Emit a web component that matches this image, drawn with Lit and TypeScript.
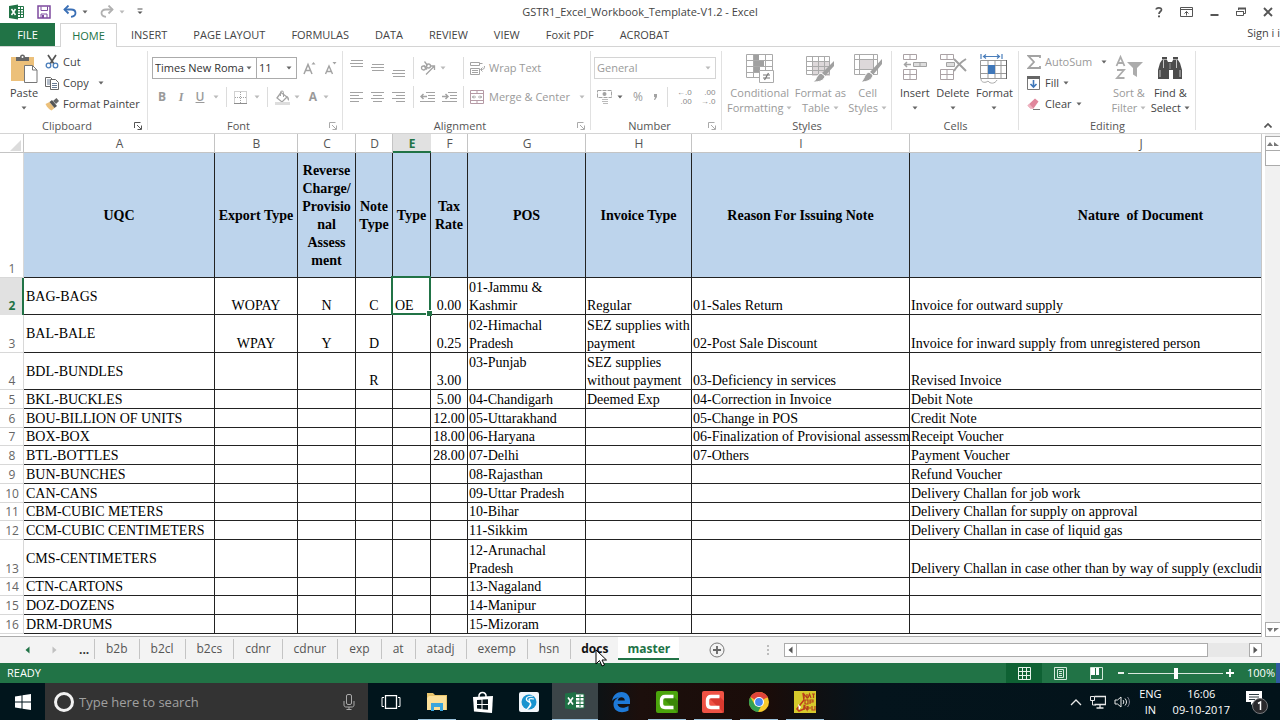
import { LitElement, html, css, svg, nothing } from "lit";
import { customElement } from "lit/decorators.js";
import { classMap } from "lit/directives/class-map.js";

const icon = (w: number, h: number, body: unknown) =>
  html`<svg class="icon" width=${w} height=${h} viewBox="0 0 ${w} ${h}" fill="none" aria-hidden="true">${body}</svg>`;

const caret = (color = "#666") =>
  html`<svg class="icon" width="6" height="4" viewBox="0 0 6 4" aria-hidden="true"><path d="M0.5 0.5h5L3 3.5z" fill=${color} /></svg>`;

const launcher = (color: string) =>
  icon(8, 8, svg`<path d="M0.500 6V0.500h6M3 3l4 4M7.500 3.500v4h-4" stroke=${color}/>`);

const lines = (rows: number[][], h = 12) =>
  icon(14, h, svg`${rows.map(([x, y, w]) => svg`<path d="M${x} ${y + 0.5}h${w}" stroke="#a3a3a3"/>`)}`);

const G = "#a3a3a3";
const D = "#555";

const icons = {
  excel: icon(16, 16, svg`<path d="M7.500 2.500h7v11h-7z" fill="#fff" stroke="#217346"/><path d="M8 5.500h6M8 8h6M8 10.500h6M11.500 3v10" stroke="#217346"/><path d="M0 2l9-1.500v15L0 14z" fill="#217346"/><path d="M2.500 5l4 6M6.500 5l-4 6" stroke="#fff" stroke-width="1.500"/>`),
  save: icon(14, 14, svg`<path d="M1 1h12v12H1z" stroke="#7d4a9e" stroke-width="1.500"/><path d="M4 1.500v4h6.500v-4M4 13V9h6v4" stroke="#7d4a9e"/><path d="M5 10h2v3H5z" fill="#7d4a9e"/>`),
  undo: icon(14, 13, svg`<path d="M1.500 4.500H8c3 0 4.500 1.500 4.500 3.500S11 11.500 8 11.800" stroke="#3a6fb5" stroke-width="1.800"/><path d="M5.500 0.500l-4 4 4 4" stroke="#3a6fb5" stroke-width="1.800"/>`),
  redo: icon(14, 13, svg`<path d="M12.500 4.500H6C3 4.500 1.500 6 1.500 8S3 11.500 6 11.800" stroke="#b0b0b0" stroke-width="1.800"/><path d="M8.500 0.500l4 4-4 4" stroke="#b0b0b0" stroke-width="1.800"/>`),
  custom: icon(6, 7, svg`<path d="M0.500 1h5" stroke="#555"/><path d="M0.500 3.500h5L3 6z" fill="#555"/>`),
  help: icon(8, 12, svg`<path d="M1.200 3.500C1.200 1.500 6.500 1 6.500 3.700 6.500 5.600 4 5.500 4 8" stroke="#555" stroke-width="1.700"/><path d="M3 9.500h2v1.800H3z" fill="#555"/>`),
  ribbonOpt: icon(13, 10, svg`<path d="M0.500 0.500h12v9H0.500zM1 2.500h11" stroke="#555"/><path d="M6.500 8.500v-4M4.500 6.500l2-2 2 2" stroke="#555"/>`),
  min: icon(9, 10, svg`<path d="M0.500 8h8" stroke="#555" stroke-width="2"/>`),
  restore: icon(10, 10, svg`<path d="M2.500 3V1.500h7v5H8" stroke="#555"/><path d="M2 1.500h8" stroke="#555" stroke-width="2"/><path d="M0.500 4.500h7v4h-7z" stroke="#555"/><path d="M0 4.500h8" stroke="#555"/>`),
  close: icon(10, 10, svg`<path d="M1 1l8 8M9 1L1 9" stroke="#555" stroke-width="1.900"/>`),
  paste: icon(28, 30, svg`<path d="M1 3h23v24H1z" fill="#ecc07a"/><path d="M6 7V3h4a2.500 2.500 0 015 0h4v4z" fill="#666"/><circle cx="12.500" cy="3" r="1" fill="#fff"/><path d="M14.500 11.500h8l4.500 4.500v12.500H14.500z" fill="#fff" stroke="#777"/><path d="M22.500 11.500V16H27" stroke="#777"/>`),
  cut: icon(14, 15, svg`<path d="M3 1l6 9M11 1L5 10" stroke="#555" stroke-width="1.700"/><circle cx="3.500" cy="11.500" r="2.300" stroke="#4a7ebb" stroke-width="1.300"/><circle cx="10.500" cy="11.500" r="2.300" stroke="#4a7ebb" stroke-width="1.300"/>`),
  copy: icon(14, 14, svg`<path d="M0.500 1.500h5l2 2v7h-7z" fill="#fff" stroke="#666"/><path d="M5.500 3.500h5l3 3v7h-8z" fill="#fff" stroke="#666"/><path d="M2 4h3M2 6h3M2 8h3M7 7.500h5M7 9.500h5M7 11.500h5" stroke="#6a7c94"/>`),
  painter: icon(14, 14, svg`<path d="M0.500 7l4-2 5 6-3 2.500C4 12.500 2 10 0.500 7z" fill="#ecc07a"/><path d="M4.500 5L7 3l5 6-2.500 2z" fill="#555"/><path d="M8 4l3.500-3 2.500 3-3 3z" fill="#666"/>`),
  growA: icon(14, 14, svg`<path d="M1 13L5 3.500 9 13M2.500 9.500h5" stroke=${G} stroke-width="1.500"/><path d="M8.500 3.500L10.500 1l2 2.500z" fill=${G}/>`),
  shrinkA: icon(14, 14, svg`<path d="M1.500 13L5 5l3.500 8M3 10.500h4" stroke=${G} stroke-width="1.400"/><path d="M8.500 1h4l-2 2.500z" fill=${G}/>`),
  borders: icon(13, 13, svg`<path d="M0.500 0.500h12v12H0.500zM6.500 1v11M1 6.500h11" stroke=${G} stroke-dasharray="1 1"/><path d="M0 12.500h13" stroke="#8d8d8d"/>`),
  bucket: icon(15, 15, svg`<path d="M6 2.500L12 7l-5 5-5-4z" stroke=${G} stroke-width="1.300"/><path d="M5.500 6V2.500a1.500 1.500 0 013 0V7" stroke=${G}/><path d="M12 6c2 1 2.500 3 1.500 5-1-1-1.500-3-1.500-5z" fill=${G}/><path d="M0 13.500h15" stroke="#ddd" stroke-width="3"/>`),
  orient: icon(16, 15, svg`<circle cx="3.500" cy="7" r="2" stroke=${G} stroke-width="1.300"/><path d="M4 4.500l3 4" stroke=${G} stroke-width="1.300"/><circle cx="8.500" cy="5" r="2" stroke=${G} stroke-width="1.300"/><path d="M4.500 0.500l3 4" stroke=${G} stroke-width="1.300"/><path d="M6 13.500L14.500 5M14.500 9V5h-4" stroke=${G} stroke-width="1.300"/>`),
  outdent: icon(15, 12, svg`<path d="M6 1.500h9M8 4.500h7M8 7.500h7M0 10.500h15" stroke=${G}/><path d="M7 5.500H1M3.500 3L1 5.500 3.500 8" stroke=${G} stroke-width="1.500"/>`),
  indent: icon(15, 12, svg`<path d="M6 1.500h9M8 4.500h7M8 7.500h7M0 10.500h15" stroke=${G}/><path d="M0 5.500h6M3.500 3L6 5.500 3.500 8" stroke=${G} stroke-width="1.500"/>`),
  wrap: icon(15, 15, svg`<path d="M0.500 1.500h9v3h-9zM9.500 2.500h3M0.500 7.500h9v6h-9zM2 9.500h6M2 11.500h6" stroke=${G}/><path d="M14.500 5c0 3-1 3.500-3.500 3.500M12.500 6.500l-2 2 2 2" stroke=${G}/>`),
  merge: icon(15, 14, svg`<path d="M0.500 0.500h13v13H0.500zM0.500 3.500h13M0.500 10.500h13M7 1v2.500M7 10.500V13" stroke="#b59aa5"/><path d="M2 7h4M12 7H8M4 5.500L2.500 7 4 8.500M10 5.500L11.500 7 10 8.500" stroke=${G}/>`),
  money: icon(16, 16, svg`<path d="M0.500 1.500h14v7h-14z" stroke=${G} stroke-dasharray="4 1"/><circle cx="7.500" cy="5" r="2" fill=${G}/><path d="M5 10.500h6M5 12.500h6M6 14.500h5" stroke="#bbb"/>`),
  comma: icon(5, 8, svg`<path d="M1 1h3v3L2 7H1l1-3H1z" fill=${G}/>`),
  cond: icon(28, 30, svg`<path d="M0.500 0.500h26v23H0.500zM0.500 6.500h26M0.500 12.500h26M0.500 18.500h26M7.500 0.500v23M19.500 0.500v23" stroke="#aaa"/><path d="M8 1h5v5H8zM8 7h10v5H8zM8 13h6v5H8z" fill="#a0a0a0"/><path d="M13.500 16.500h14v12h-14z" fill="#fff" stroke="#aaa"/><path d="M17 21h7M17 24h7M22.500 19l-4 7" stroke="#777" stroke-width="1.200"/>`),
  table: icon(28, 30, svg`<path d="M6 8h18v14H6z" fill="#ddd8da"/><path d="M0.500 2.500h23v18H0.500zM0.500 7.500h23M0.500 12.500h23M0.500 16.500h23M6.500 2.500v18M12.500 2.500v18M18.500 2.500v18" stroke="#aaa"/><path d="M28 7v5l-9 10-3-3z" fill="#a0a0a0"/><path d="M15 19l4 3c-1 5-6 6-12 6 4-2 3-7 8-9z" fill="#a0a0a0" stroke="#fff"/>`),
  styles: icon(28, 30, svg`<path d="M5 6h15v10H5z" fill="#ddd8da"/><path d="M0.500 0.500h23v20H0.500zM0.500 5.500h23M0.500 15.500h23M5.500 0.500v20M19.500 0.500v20" stroke="#aaa"/><path d="M28 5v5l-9 11-3-3z" fill="#a0a0a0"/><path d="M15 18l4 3c-1 5-6 7-12 7 4-3 3-8 8-10z" fill="#a0a0a0" stroke="#fff"/>`),
  insert: icon(26, 28, svg`<path d="M1.500 0.500h13v5h-13zM8 0.500v5M1.500 15.500h13v10h-13zM8 15.500v10M1.500 20.500h13" stroke="#aaa2a5"/><path d="M11.500 8.500h13v4h-13z" fill="#ddd" stroke=${G}/><path d="M18 8.500v4" stroke=${G}/><path d="M9 10.500H2M5 8l-2.500 2.500L5 13" stroke=${G} stroke-width="1.500"/>`),
  del: icon(28, 28, svg`<path d="M1.500 0.500h13v5h-13zM8 0.500v5M1.500 15.500h13v10h-13zM8 15.500v10M1.500 20.500h13" stroke="#aaa2a5"/><path d="M7.500 8.500h8v4h-8z" fill="#ddd" stroke=${G}/><path d="M15 5c4 4 8 8 12 12M27 5c-5 3-9 7-12 12" stroke="#a0a0a0" stroke-width="2"/>`),
  format: icon(28, 30, svg`<path d="M1 0v5M22 0v5M3 2.500h17M6 0.500L3.500 2.500 6 4.500M17 0.500L19.500 2.500 17 4.500" stroke="#4a7ebb" stroke-width="1.200"/><path d="M0.500 6.500h26v18H0.500zM0.500 11.500h26M0.500 19.500h26M8 6.500v18M15 6.500v18M21 6.500v18" stroke="#999"/><path d="M26.500 6v19" stroke="#666"/><path d="M8 11h7v9H8z" fill="#3f77b9"/><path d="M1 25c0 4 5 4 7 2 2 3 7 3 9-1" stroke="#aaa"/>`),
  sum: icon(14, 14, svg`<path d="M13 3V1H1.500L7 7l-5.500 6H13v-2" stroke=${G} stroke-width="1.800"/>`),
  fill: icon(14, 14, svg`<path d="M0.500 0.500h12v13H0.500z" fill="#fff" stroke="#777"/><path d="M0 1.500h13" stroke="#666" stroke-width="3"/><path d="M6.500 4v7M3.500 8l3 3 3-3" stroke="#3f77b9" stroke-width="1.600"/>`),
  clear: icon(14, 12, svg`<path d="M8 0.500l3.500 3-5 7H3.500L0.500 7.500z" fill="#e0869c"/><path d="M0.500 7.500l3 3h3l-4-4.500z" fill="#efb3c0"/><path d="M6 11.500h7" stroke="#777"/>`),
  sort: icon(28, 28, svg`<path d="M1.500 12L5.500 3 9.500 12M3 9h5M2 16h7l-7 8h7.500" stroke="#acacac" stroke-width="1.800"/><path d="M12 8h16l-6 6v9l-4-2.500V14z" fill="#acacac"/>`),
  find: icon(26, 28, svg`<path d="M5 3h5v3l1 2h4l1-2V3h5v3l2 3 2 7v9h-9v-9h-4v9H1v-9l2-7 2-3z" fill="#4c4c4c"/><path d="M13 9v6" stroke="#999"/><path d="M3 16v7M23 16v7M6.500 6v8M19.500 6v8" stroke="#c4c4c4"/><path d="M5 5.500h5M16 5.500h5" stroke="#aaa"/>`),
  collapse: icon(8, 5, svg`<path d="M0.500 4.500L4 1l3.500 3.500" stroke="#555" stroke-width="1.700"/>`),
  plus: icon(16, 16, svg`<circle cx="8" cy="8" r="7" stroke="#777"/><path d="M8 4v8M4 8h8" stroke="#666" stroke-width="1.800"/>`),
  dots: icon(2, 12, svg`<path d="M1 1v2M1 5v2M1 9v2" stroke="#aaa" stroke-width="1.500"/>`),
  triL: (c: string) => icon(5, 8, svg`<path d="M4.500 0.500v7L0.500 4z" fill=${c}/>`),
  triR: (c: string) => icon(5, 8, svg`<path d="M0.500 0.500v7L4.500 4z" fill=${c}/>`),
  triU: icon(14, 6, svg`<path d="M1 5l3-4 3 4zM8 5V1l5 4z" fill="#777"/>`),
  triD: icon(14, 6, svg`<path d="M1 1h6L4 5zM8 1h5L8 5z" fill="#777"/>`),
  normal: icon(13, 13, svg`<path d="M0.500 0.500h12v12H0.500zM4.500 0v13M8.500 0v13M0 4.500h13M0 8.500h13" stroke="#e6f3ea"/>`),
  pageView: icon(13, 13, svg`<path d="M0.500 0.500h12v12H0.500zM3.500 2.500h6v8h-6zM5 4.500h3M5 6.500h3M5 8.500h3" stroke="#d5eadc"/>`),
  breakView: icon(13, 13, svg`<path d="M0.500 0.500h12v12H0.500z" stroke="#d5eadc"/><path d="M1 1h4v7H1zM6 1h3v7H6z" fill="#fff"/>`),
  windows: icon(16, 16, svg`<path d="M0 2.500L6.500 1.500V7.500H0zM7.500 1.300L16 0v7.500H7.500zM0 8.500h6.500v6L0 13.500zM7.500 8.500H16V16l-8.500-1.300z" fill="#fff"/>`),
  cortana: icon(22, 22, svg`<circle cx="11" cy="11" r="8.500" stroke="#f2f2f2" stroke-width="3"/>`),
  mic: icon(12, 16, svg`<rect x="3.500" y="0.500" width="5" height="10" rx="1.500" stroke="#aaa"/><path d="M1 7v4c0 1.500 1 2 2 2h6c1 0 2-.5 2-2V7M6 13v2.500M3.500 15.500h5" stroke="#aaa"/>`),
  taskview: icon(20, 14, svg`<path d="M4.500 0.500h11v13h-11z" stroke="#fff" stroke-width="1.300"/><path d="M3 2.500H1v9h2M17 2.500h2v9h-2" stroke="#fff"/>`),
  folder: icon(22, 20, svg`<path d="M1 1h6l2 2h12v15H1z" fill="#e8c56c"/><path d="M3 4h17v14H1V6z" fill="#fbe09a"/><path d="M5 19v-8h12v8h-3v-4H8v4z" fill="#3aa5dd"/>`),
  store: icon(22, 22, svg`<path d="M7 6C6 0 15 0 14 6" stroke="#fff" stroke-width="1.500"/><path d="M1 6l20-1-1 17-18-1.500z" fill="#fff"/><path d="M5 9l4.500-.3v4.300H5zM10.500 8.600l5.500-.3v4.700h-5.500zM5 14h4.500v4L5 17.600zM10.500 14H16v4.700l-5.500-.5z" fill="#07161c"/>`),
  shield: icon(22, 22, svg`<rect x="1" y="1" width="20" height="20" rx="2" fill="#f2f6fa"/><circle cx="11" cy="11" r="7.500" fill="#1993cf"/><path d="M15 5c-8 0-8 4-4 6s1 5-3 8M16 8c-5-1-6 0-4 3 1 2 0 4-2 6" stroke="#fff" stroke-width="1.200"/>`),
  excelBig: icon(22, 20, svg`<path d="M11 3h9v14h-9z" fill="#fff" stroke="#1e7145"/><path d="M12 6.500h8M12 10h8M12 13.500h8M16 4v12" stroke="#1e7145"/><path d="M1 2.500L12 1v18L1 17.500z" fill="#1e7145"/><path d="M4 6.500l5 7M9 6.500l-5 7" stroke="#fff" stroke-width="1.600"/>`),
  edge: icon(22, 22, svg`<path d="M2 10C3 4 7 1 11.500 1 17 1 20 5 20 10v3H7.500c.5 4 6 5 11 2v4.500C12 23 3.500 21 3.500 13.500 3.500 10 6 7 9.500 6 5.500 6.500 3 8.500 2 10zm5.800-.5h7c0-4-6.300-4.500-7 0z" fill="#1e7ad8"/>`),
  camG: icon(24, 24, svg`<rect x="1" y="1" width="22" height="22" rx="2" fill="#4ba40c"/><path d="M23 23L7 7h12l4 4z" fill="#3b8708"/><path d="M18.500 6.500H10Q6.500 6.500 6.500 10v4Q6.500 17.500 10 17.500h8.500" stroke="#fff" stroke-width="3.400"/>`),
  camR: icon(24, 24, svg`<rect x="1" y="1" width="22" height="22" rx="2" fill="#ef5245"/><path d="M23 23L7 7h12l4 4z" fill="#d8392f"/><path d="M18.500 6.500H10Q6.500 6.500 6.500 10v4Q6.500 17.500 10 17.500h8.500" stroke="#fff" stroke-width="3.400"/>`),
  chrome: icon(22, 22, svg`<circle cx="11" cy="11" r="10" fill="#f6c92d"/><path d="M11 11L2.300 6A10 10 0 0119.700 6z" fill="#e0443a"/><path d="M2.300 6A10 10 0 0010 21l4-7.500-7.300 0z" fill="#33a152"/><path d="M11 6h8.700" stroke="#e0443a" stroke-width="1"/><circle cx="11" cy="11" r="5" fill="#fff"/><circle cx="11" cy="11" r="3.900" fill="#4688f1"/>`),
  nation: icon(24, 24, svg`<path d="M1 1h22v22H1z" fill="#d6c92c"/><path d="M10 3l1 7-4 5-3 4 2 2 5-2 1-4" stroke="#c2381c" stroke-width="1.500"/><path d="M11 8V4l3 4V4M15 8l1.500-4L18 8M19 4h3M20.500 4v4M12 10v4h3v-4h-3M17 14v-4h3v2h-3M11 20v-4l3 4v-4M15 18h3M15 16v4M19 16v4h3v-4" stroke="#b5401d" stroke-width="1.200"/><path d="M5 14l3 3-2 3z" fill="#fff"/>`),
  trayUp: icon(12, 8, svg`<path d="M1 7l5-5 5 5" stroke="#e8e8e8" stroke-width="1.300"/>`),
  net: icon(16, 14, svg`<path d="M4.500 1.500h11v8h-11M10 10v3M6.500 13h7" stroke="#e8e8e8" stroke-width="1.300"/><path d="M0.500 1.500h4v4h-4zM2.500 6v4H6" stroke="#e8e8e8"/>`),
  sound: icon(16, 14, svg`<path d="M1 5h2.500L7 2v10L3.500 9H1z" stroke="#e8e8e8"/><path d="M9 5c1 1 1 3 0 4M11 3.500c2 2 2 5 0 7" stroke="#e8e8e8"/><path d="M13.500 2c2.500 3 2.500 7 0 10" stroke="#889"/>`),
  note: icon(24, 26, svg`<path d="M1 2h16v11h-8l-3 3v-3H1z" fill="#fff"/><path d="M4 5.500h10M4 8h10M4 10.500h6" stroke="#2b3a40"/><circle cx="15" cy="17" r="7.500" fill="#29292c" stroke="#77797c"/><path d="M13 14.500l2.500-1.500v8" stroke="#fff" stroke-width="1.500"/>`),
  cursor: icon(12, 18, svg`<path d="M1 1v14l3.500-3.500L7 17l2.500-1-2.500-5h4.500z" fill="#fff" stroke="#000"/>`),
};

interface Row { h: number; cells: string[] }
const HEADS = ["UQC", "Export Type", "Reverse\nCharge/\nProvisio\nnal\nAssess\nment", "Note\nType", "Type", "Tax\nRate", "POS", "Invoice Type", "Reason For Issuing Note", "Nature  of Document"];
const LETTERS = ["A", "B", "C", "D", "E", "F", "G", "H", "I", "J"];
const ROWS: Row[] = [
  { h: 37, cells: ["BAG-BAGS", "WOPAY", "N", "C", "OE", "0.00", "01-Jammu &\nKashmir", "Regular", "01-Sales Return", "Invoice for outward supply"] },
  { h: 38, cells: ["BAL-BALE", "WPAY", "Y", "D", "", "0.25", "02-Himachal\nPradesh", "SEZ supplies with\npayment", "02-Post Sale Discount", "Invoice for inward supply from unregistered person"] },
  { h: 37, cells: ["BDL-BUNDLES", "", "", "R", "", "3.00", "03-Punjab\n ", "SEZ supplies\nwithout payment", "03-Deficiency in services", "Revised Invoice"] },
  { h: 19, cells: ["BKL-BUCKLES", "", "", "", "", "5.00", "04-Chandigarh", "Deemed Exp", "04-Correction in Invoice", "Debit Note"] },
  { h: 19, cells: ["BOU-BILLION OF UNITS", "", "", "", "", "12.00", "05-Uttarakhand", "", "05-Change in POS", "Credit Note"] },
  { h: 18, cells: ["BOX-BOX", "", "", "", "", "18.00", "06-Haryana", "", "06-Finalization of Provisional assessment", "Receipt Voucher"] },
  { h: 19, cells: ["BTL-BOTTLES", "", "", "", "", "28.00", "07-Delhi", "", "07-Others", "Payment Voucher"] },
  { h: 19, cells: ["BUN-BUNCHES", "", "", "", "", "", "08-Rajasthan", "", "", "Refund Voucher"] },
  { h: 19, cells: ["CAN-CANS", "", "", "", "", "", "09-Uttar Pradesh", "", "", "Delivery Challan for job work"] },
  { h: 18, cells: ["CBM-CUBIC METERS", "", "", "", "", "", "10-Bihar", "", "", "Delivery Challan for supply on approval"] },
  { h: 19, cells: ["CCM-CUBIC CENTIMETERS", "", "", "", "", "", "11-Sikkim", "", "", "Delivery Challan in case of liquid gas"] },
  { h: 38, cells: ["CMS-CENTIMETERS", "", "", "", "", "", "12-Arunachal\nPradesh", "", "", "Delivery Challan in case other than by way of supply (excluding at S no. 9 to 11)"] },
  { h: 18, cells: ["CTN-CARTONS", "", "", "", "", "", "13-Nagaland", "", "", ""] },
  { h: 19, cells: ["DOZ-DOZENS", "", "", "", "", "", "14-Manipur", "", "", ""] },
  { h: 19, cells: ["DRM-DRUMS", "", "", "", "", "", "15-Mizoram", "", "", ""] },
];
const ALIGN = ["mid", "ctr", "ctr", "ctr", "", "ctr", "", "", "", ""];

const base = css`
  *, :host { box-sizing: border-box; }
  :host { font-family: "Open Sans", "Noto Sans", sans-serif; font-size: 11px; line-height: 14px; color: #444; }
  button { font: inherit; color: inherit; background: none; border: 0; padding: 0; margin: 0; white-space: nowrap; }
  .icon { display: block; flex: none; }
`;

@customElement("title-bar")
export class TitleBar extends LitElement {
  static styles = [base, css`
    :host { display: grid; grid-template-columns: 1fr auto 1fr; align-items: center; height: 23px; background: #fff; }
    .side { display: flex; align-items: center; }
    .quick { padding-left: 9px; gap: 12px; }
    .quick button { display: flex; align-items: center; gap: 5px; }
    .win { justify-content: flex-end; gap: 17px; padding-right: 7px; }
  `];
  render() {
    return html`
      <div class="side quick">
        <button aria-label="Excel">${icons.excel}</button>
        <button aria-label="Save">${icons.save}</button>
        <button aria-label="Undo">${icons.undo}${caret()}</button>
        <button aria-label="Redo">${icons.redo}${caret("#bbb")}</button>
        <button aria-label="Customize toolbar">${icons.custom}</button>
      </div>
      <div>GSTR1_Excel_Workbook_Template-V1.2 - Excel</div>
      <div class="side win">
        <button aria-label="Help">${icons.help}</button>
        <button aria-label="Ribbon display options">${icons.ribbonOpt}</button>
        <button aria-label="Minimize">${icons.min}</button>
        <button aria-label="Restore">${icons.restore}</button>
        <button aria-label="Close">${icons.close}</button>
      </div>`;
  }
}

@customElement("ribbon-tabs")
export class RibbonTabs extends LitElement {
  static styles = [base, css`
    :host { display: flex; height: 24px; border-bottom: 1px solid #d4d4d4; background: #fff; }
    button { padding: 0 13px; height: 23px; }
    .file { background: #217346; color: #fff; width: 55px; margin-right: 5px; }
    .on { color: #217346; border: 1px solid #d4d4d4; border-bottom: 0; background: #fff; height: 24px; width: 57px; padding: 0; margin-right: 1px; }
    .sign { margin-left: auto; padding: 0; height: 20px; }
  `];
  render() {
    return html`
      <button class="file">FILE</button><button class="on">HOME</button>
      ${["INSERT", "PAGE LAYOUT", "FORMULAS", "DATA", "REVIEW", "VIEW", "Foxit PDF", "ACROBAT"].map((t) => html`<button>${t}</button>`)}
      <button class="sign">Sign i i</button>`;
  }
}

@customElement("ribbon-bar")
export class RibbonBar extends LitElement {
  static styles = [base, css`
    :host { display: flex; height: 87px; padding-top: 4px; border-bottom: 1px solid #d4d4d4; background: #fff; }
    section { display: grid; grid-template-rows: minmax(0, 1fr) 15px; background: linear-gradient(#e1e1e1, #e1e1e1) right top / 1px 79px no-repeat; flex: none; }
    .clipboard { width: 148px; }
    .font { width: 195px; }
    .align { width: 248px; }
    .number { width: 131px; }
    .styles { width: 170px; }
    .cells { width: 127px; }
    .editing { width: 177px; }
    .foot { display: flex; align-items: center; text-align: center; color: #555; }
    .foot button { width: 14px; }
    .foot span { flex: 1; }
    .row { display: flex; align-items: center; }
    .stack { display: flex; flex-direction: column; }
    .off { color: #9a9a9a; }
    .big { display: flex; flex-direction: column; align-items: center; padding-top: 3px; align-self: start; }
    .pic { height: 32px; }
    .lab { display: flex; align-items: center; gap: 3px; height: 15px; }
    .body { display: flex; min-width: 0; }
    .small { display: flex; align-items: center; gap: 4px; height: 21px; }
    .small .caret { margin-left: 5px; }
    .clipboard .body { padding-left: 10px; gap: 7px; }
    .two { flex-direction: column; padding: 6px 0 0 4px; gap: 7px; }
    .two .row { height: 22px; }
    .combo { display: grid; border: 1px solid #ababab; background: #fff; height: 22px; align-items: center; }
    .combo > * { grid-area: 1 / 1; }
    .combo svg { justify-self: end; margin-right: 4px; pointer-events: none; }
    select { appearance: none; border: 0; background: transparent; font: inherit; color: #333; padding: 0 12px 0 2px; margin: 0; width: 100%; height: 20px; text-overflow: clip; }
    .face { width: 105px; }
    .size { width: 40px; border-left: 0; margin-right: 6px; }
    .fmt { width: 122px; border-color: #d4d4d4; }
    .fmt select { color: #9a9a9a; }
    .glyph { width: 12px; text-align: center; font-size: 12px; color: #9a9a9a; }
    .b { font-weight: 700; }
    .i { font-style: italic; font-family: "Liberation Serif", serif; font-weight: 700; }
    .u { text-decoration: underline; font-weight: 600; }
    .marks { padding-left: 4px; }
    .g9 { gap: 9px; }
    .g7 { gap: 7px; }
    .g4 { gap: 4px; }
    .sep { width: 1px; height: 20px; background: #dcdcdc; }
    .align .body { display: grid; grid-template-columns: 63px 50px 1fr; padding: 6px 0 0 7px; align-content: start; row-gap: 7px; }
    .align .row { height: 22px; }
    .align .ruled { border-left: 1px solid #dcdcdc; padding-left: 6px; }
    .align .high { align-self: flex-start; }
    .align .low { align-self: flex-end; }
    .number .two { padding-left: 3px; }
    .number .marks { padding-left: 3px; }
    .dec { font-family: "Liberation Sans", sans-serif; font-size: 8px; line-height: 9px; text-align: right; color: #888; }
    .dec span { display: block; }
    .styles .body { padding: 0 5px; justify-content: space-between; }
    .cells .body, .editing .body { padding: 0 6px 0 8px; justify-content: space-between; }
    .collapse { margin: auto 8px 5px auto; }
  `];
  private big(ic: unknown, a: string, b: string, off = false) {
    return html`<button class=${classMap({ big: true, off })}><span class="pic">${ic}</span><span>${a}</span><span class="lab">${b}${caret(off ? "#bbb" : "#666")}</span></button>`;
  }
  private foot(label: string, color?: string) {
    return html`<div class="foot"><span>${label}</span>${color ? html`<button aria-label="${label} settings">${launcher(color)}</button>` : nothing}</div>`;
  }
  render() {
    return html`
      <section class="clipboard">
        <div class="body">
          ${this.big(icons.paste, "Paste", "")}
          <div class="stack">
            <button class="small">${icons.cut}Cut</button>
            <button class="small">${icons.copy}Copy <span class="caret">${caret()}</span></button>
            <button class="small">${icons.painter}Format Painter</button>
          </div>
        </div>
        ${this.foot("Clipboard", D)}
      </section>
      <section class="font">
        <div class="body two">
          <div class="row">
            <div class="combo face"><select aria-label="Font"><option>Times New Roman</option></select>${caret()}</div>
            <div class="combo size"><select aria-label="Font size"><option>11</option></select>${caret()}</div>
            <div class="row g7"><button aria-label="Increase font size">${icons.growA}</button><button aria-label="Decrease font size">${icons.shrinkA}</button></div>
          </div>
          <div class="row g7 marks">
            <button class="glyph b">B</button><button class="glyph i">I</button><button class="glyph u">U</button>${caret("#bbb")}
            <span class="sep"></span>
            <button class="row g7" aria-label="Borders">${icons.borders}${caret("#bbb")}</button>
            <span class="sep"></span>
            <button class="row g4" aria-label="Fill color">${icons.bucket}${caret("#bbb")}</button>
            <button class="row g4"><span class="glyph b">A</span>${caret("#bbb")}</button>
          </div>
        </div>
        ${this.foot("Font", "#aaa")}
      </section>
      <section class="align">
        <div class="body">
          <div class="row g7">
            <button class="high" aria-label="Top align">${lines([[1, 3, 12], [0, 6, 13], [1, 9, 12]])}</button>
            <button aria-label="Middle align">${lines([[1, 2, 12], [0, 5, 13], [1, 8, 12]])}</button>
            <button class="low" aria-label="Bottom align">${lines([[1, 3, 12], [0, 6, 13], [1, 9, 12]])}</button>
          </div>
          <div class="row g4 ruled"><button class="row g4" aria-label="Orientation">${icons.orient}${caret("#bbb")}</button></div>
          <div class="row ruled"><button class="row g4 off">${icons.wrap}Wrap Text</button></div>
          <div class="row g7">
            <button aria-label="Align left">${lines([[0, 1, 13], [0, 4, 9], [0, 7, 13], [0, 10, 9]])}</button>
            <button aria-label="Center">${lines([[0, 1, 13], [2, 4, 9], [0, 7, 13], [2, 10, 9]])}</button>
            <button aria-label="Align right">${lines([[0, 1, 13], [4, 4, 9], [0, 7, 13], [4, 10, 9]])}</button>
          </div>
          <div class="row g7 ruled"><button aria-label="Decrease indent">${icons.outdent}</button><button aria-label="Increase indent">${icons.indent}</button></div>
          <div class="row g9 ruled"><button class="row g4 off">${icons.merge}Merge &amp; Center</button>${caret("#bbb")}</div>
        </div>
        ${this.foot("Alignment", "#aaa")}
      </section>
      <section class="number">
        <div class="body two">
          <div class="combo fmt"><select aria-label="Number format"><option>General</option></select>${caret("#bbb")}</div>
          <div class="row g9 marks">
            <button class="row g4" aria-label="Accounting format">${icons.money}${caret()}</button>
            <button class="glyph">%</button><button aria-label="Comma style">${icons.comma}</button><span class="sep"></span>
            <button class="dec"><span>←.0</span><span>.00</span></button>
            <button class="dec"><span>.00</span><span>→.0</span></button>
          </div>
        </div>
        ${this.foot("Number", "#aaa")}
      </section>
      <section class="styles">
        <div class="body">
          ${this.big(icons.cond, "Conditional", "Formatting", true)}
          ${this.big(icons.table, "Format as", "Table", true)}
          ${this.big(icons.styles, "Cell", "Styles", true)}
        </div>
        ${this.foot("Styles")}
      </section>
      <section class="cells">
        <div class="body">${this.big(icons.insert, "Insert", "")}${this.big(icons.del, "Delete", "")}${this.big(icons.format, "Format", "")}</div>
        ${this.foot("Cells")}
      </section>
      <section class="editing">
        <div class="body">
          <div class="stack">
            <button class="small off">${icons.sum}AutoSum <span class="caret">${caret()}</span></button>
            <button class="small">${icons.fill}Fill ${caret()}</button>
            <button class="small">${icons.clear}Clear ${caret()}</button>
          </div>
          ${this.big(icons.sort, "Sort &", "Filter", true)}
          ${this.big(icons.find, "Find &", "Select")}
        </div>
        ${this.foot("Editing")}
      </section>
      <button class="collapse" aria-label="Collapse the ribbon">${icons.collapse}</button>`;
  }
}

@customElement("sheet-grid")
export class SheetGrid extends LitElement {
  static styles = [base, css`
    :host { display: grid; grid-template-columns: 1fr 18px; min-height: 0; background: #fff; }
    .view { overflow: hidden; min-width: 0; border-right: 1px solid #c6c6c6; border-bottom: 1px solid #ababab; }
    table { table-layout: fixed; width: 1372px; border-collapse: separate; border-spacing: 0; }
    .c0 { width: 24px; } .c1 { width: 191px; } .c2 { width: 83px; } .c3 { width: 58px; } .c4 { width: 37px; }
    .c5 { width: 38px; } .c6 { width: 37px; } .c7 { width: 118px; } .c8 { width: 106px; } .c9 { width: 218px; } .c10 { width: 462px; }
    th, td { padding: 0; font-weight: 400; }
    .cols th { height: 19px; line-height: 18px; font-size: 12px; color: #555; box-shadow: inset -1px -1px 0 #c4c4c4; }
    .cols .sel, .num.sel { background: #e1e1e1; color: #217346; font-weight: 700; }
    .cols .sel { box-shadow: inset 0 -2px 0 #217346; }
    .num { font-size: 12px; line-height: 18px; color: #666; text-align: center; vertical-align: bottom; box-shadow: inset -1px -1px 0 #d8d8d8; }
    .num.sel { box-shadow: inset -2px 0 0 #217346; }
    .cell { font-family: "Liberation Serif", serif; font-size: 14px; line-height: 18px; color: #000; white-space: pre; overflow: hidden; text-align: left; vertical-align: bottom; padding-left: 1px; box-shadow: inset -1px -1px 0 #222; }
    .head .cell { background: #bdd4ec; font-weight: 700; text-align: center; vertical-align: middle; padding: 0 1px 0 0; }
    .head { height: 125px; }
    .mid { vertical-align: middle; padding-left: 2px; }
    .ctr { text-align: center; padding: 0 1px 0 0; }
    .active { position: relative; overflow: visible; padding-left: 2px; }
    .active::before { content: ""; position: absolute; inset: -2px 0 0 -2px; border: 2px solid #217346; }
    .active::after { content: ""; position: absolute; right: -1px; bottom: -1px; width: 5px; height: 5px; background: #217346; border: 1px solid #fff; border-width: 1px 0 0 1px; }
    .bar { display: flex; flex-direction: column; background: #f1f1f1; margin-left: 3px; padding-top: 2px; }
    .bar button { height: 15px; border: 1px solid #ababab; background: #fff; display: grid; place-items: center; overflow: hidden; border-right: 0; }
    .thumb { height: 15px; border: 1px solid #ababab; border-width: 0 0 1px 1px; background: #fff; margin-bottom: auto; }
  `];
  render() {
    return html`
      <div class="view">
        <table>
          <colgroup>${Array.from({ length: 11 }, (_, i) => html`<col class="c${i}" />`)}</colgroup>
          <thead>
            <tr class="cols">
              <th>${icon(24, 18, svg`<path d="M21 5v11H10z" fill="#dcdcdc"/>`)}</th>
              ${LETTERS.map((l) => html`<th class=${classMap({ sel: l === "E" })} scope="col">${l}</th>`)}
            </tr>
          </thead>
          <tbody>
            <tr class="head"><th class="num" scope="row">1</th>${HEADS.map((h) => html`<th class="cell">${h}</th>`)}</tr>
            ${ROWS.map((r, i) => html`<tr style="height:${r.h}px">
              <th class=${classMap({ num: true, sel: i === 0 })} scope="row">${i + 2}</th>
              ${r.cells.map((c, j) => html`<td class="cell ${ALIGN[j]} ${i === 0 && j === 4 ? "active" : ""}">${c}</td>`)}
            </tr>`)}
          </tbody>
        </table>
      </div>
      <div class="bar"><button aria-label="Scroll up">${icons.triU}</button><div class="thumb"></div><button aria-label="Scroll down">${icons.triD}</button></div>`;
  }
}

@customElement("sheet-tabs")
export class SheetTabs extends LitElement {
  static styles = [base, css`
    :host { display: flex; align-items: stretch; height: 26px; background: #f3f3f3; font-size: 12px; padding: 0 18px 0 25px; }
    .nav { display: flex; align-items: center; gap: 22px; width: 69px; padding-bottom: 1px; }
    .nav b { color: #333; font-size: 12px; margin-left: auto; margin-right: 10px; }
    .tab { height: 20px; margin-top: 2px; border-left: 1px solid #c4c4c4; padding: 0 11px; color: #555; }
    .tab.hot { color: #111; font-weight: 700; position: relative; padding: 0 10px; }
    .hot .icon { position: absolute; left: 24px; top: 10px; }
    .tab.on { background: #fff; color: #217346; font-weight: 700; height: 23px; margin-top: 0; border: 0; border-bottom: 2px solid #217346; padding: 2px 9px 0; }
    .add { margin-left: 30px; align-self: center; }
    .scroll { margin-left: auto; display: flex; align-items: center; flex: 0 1 495px; min-width: 0; }
    .scroll > button { width: 13px; height: 14px; border: 1px solid #ababab; background: #fff; display: grid; place-items: center; flex: none; }
    .track { flex: 1; height: 14px; background: #e8e8e8; }
    .thumb { width: 91%; height: 14px; border: 1px solid #ababab; border-left: 0; background: #fff; }
    .scroll > .icon { margin-right: 15px; }
  `];
  render() {
    return html`
      <div class="nav"><button aria-label="Previous sheet">${icons.triL("#217346")}</button><button aria-label="Next sheet">${icons.triR("#c0c0c0")}</button><b>...</b></div>
      ${["b2b", "b2cl", "b2cs", "cdnr", "cdnur", "exp", "at", "atadj", "exemp", "hsn"].map((t) => html`<button class="tab">${t}</button>`)}
      <button class="tab hot">docs${icons.cursor}</button>
      <button class="tab on">master</button>
      <button class="add" aria-label="New sheet">${icons.plus}</button>
      <div class="scroll">${icons.dots}<button aria-label="Scroll left">${icons.triL("#555")}</button><div class="track"><div class="thumb"></div></div><button aria-label="Scroll right">${icons.triR("#555")}</button></div>`;
  }
}

@customElement("status-bar")
export class StatusBar extends LitElement {
  static styles = [base, css`
    :host { display: flex; align-items: center; height: 20px; background: #217346; color: #fff; padding-left: 7px; }
    .views { margin-left: auto; display: flex; height: 20px; }
    .views button { width: 36px; display: grid; place-items: center; }
    .views .on { background: #0e6133; }
    .zoom { display: flex; align-items: center; gap: 3px; margin-left: 3px; }
    input { appearance: none; width: 95px; height: 12px; margin: 0; background: linear-gradient(#d9e8de, #d9e8de) center / 100% 1px no-repeat; }
    input::-webkit-slider-thumb { appearance: none; width: 4px; height: 11px; background: #fff; }
    .edge { width: 4px; height: 20px; background: #2f5aa0; }
    .pct { margin: 0 1px 0 13px; }
  `];
  render() {
    return html`
      <span>READY</span>
      <div class="views"><button class="on" aria-label="Normal">${icons.normal}</button><button aria-label="Page layout">${icons.pageView}</button><button aria-label="Page break preview">${icons.breakView}</button></div>
      <div class="zoom">
        <button aria-label="Zoom out">${icon(8, 8, svg`<path d="M1 4h6" stroke="#fff" stroke-width="1.800"/>`)}</button>
        <input type="range" min="0" max="100" value="50" aria-label="Zoom" />
        <button aria-label="Zoom in">${icon(8, 8, svg`<path d="M0 4h8M4 0v8" stroke="#fff" stroke-width="1.800"/>`)}</button>
      </div>
      <span class="pct">100%</span><span class="edge"></span>`;
  }
}

@customElement("task-bar")
export class TaskBar extends LitElement {
  static styles = [base, css`
    :host { display: flex; height: 37px; line-height: 16px; color: #fff; background: linear-gradient(90deg, #01151c 44%, #1c0f0c 50%, #1a0c09 60%, #04141c 68%, #02131a); }
    button { display: grid; place-items: center; }
    .start { width: 45px; }
    .search { display: flex; align-items: center; flex: 0 1 323px; background: #333; padding: 0 13px 0 8px; gap: 4px; }
    input { flex: 1; min-width: 0; background: none; border: 0; outline: 0; padding: 0; font: inherit; font-size: 13px; color: #ddd; }
    input::placeholder { color: #a0a0a0; opacity: 1; }
    .view { width: 46px; }
    .apps { display: flex; }
    .apps button { width: 46px; }
    .run { background: linear-gradient(#9cc3dc, #9cc3dc) bottom / 38px 1px no-repeat; }
    .on { background: #3b4548; border-bottom: 1px solid #9cc3dc; }
    .tray { margin-left: auto; display: flex; align-items: center; padding-right: 11px; }
    .tray button { text-align: center; }
    .ics { display: flex; gap: 8px; margin-right: 9px; align-items: center; }
    .clock { margin: 0 15px 0 11px; }
  `];
  render() {
    const apps: [string, unknown, string][] = [
      ["File Explorer", icons.folder, "run"], ["Store", icons.store, ""], ["Browser", icons.shield, ""], ["Excel", icons.excelBig, "on"],
      ["Edge", icons.edge, ""], ["Camtasia", icons.camG, "run"], ["Recorder", icons.camR, "run"], ["Chrome", icons.chrome, "run"], ["Player", icons.nation, "run"],
    ];
    return html`
      <button class="start" aria-label="Start">${icons.windows}</button>
      <label class="search">${icons.cortana}<input type="text" placeholder="Type here to search" aria-label="Search" />${icons.mic}</label>
      <button class="view" aria-label="Task view">${icons.taskview}</button>
      <div class="apps">${apps.map(([n, ic, c]) => html`<button class=${c} aria-label=${n}>${ic}</button>`)}</div>
      <div class="tray">
        <div class="ics"><button aria-label="Hidden icons">${icons.trayUp}</button><button aria-label="Network">${icons.net}</button><button aria-label="Volume">${icons.sound}</button></div>
        <button><span>ENG</span><span>IN</span></button>
        <button class="clock"><span>16:06</span><span>09-10-2017</span></button>
        <button aria-label="Notifications">${icons.note}</button>
      </div>`;
  }
}

@customElement("app-root")
export class AppRoot extends LitElement {
  static styles = css`
    :host { display: grid; grid-template-rows: auto auto auto minmax(0, 1fr) auto auto auto; grid-template-columns: minmax(0, 1fr); height: 100vh; overflow: hidden; background: #fff; }
  `;
  render() {
    return html`<title-bar></title-bar><ribbon-tabs></ribbon-tabs><ribbon-bar></ribbon-bar><sheet-grid></sheet-grid><sheet-tabs></sheet-tabs><status-bar></status-bar><task-bar></task-bar>`;
  }
}
